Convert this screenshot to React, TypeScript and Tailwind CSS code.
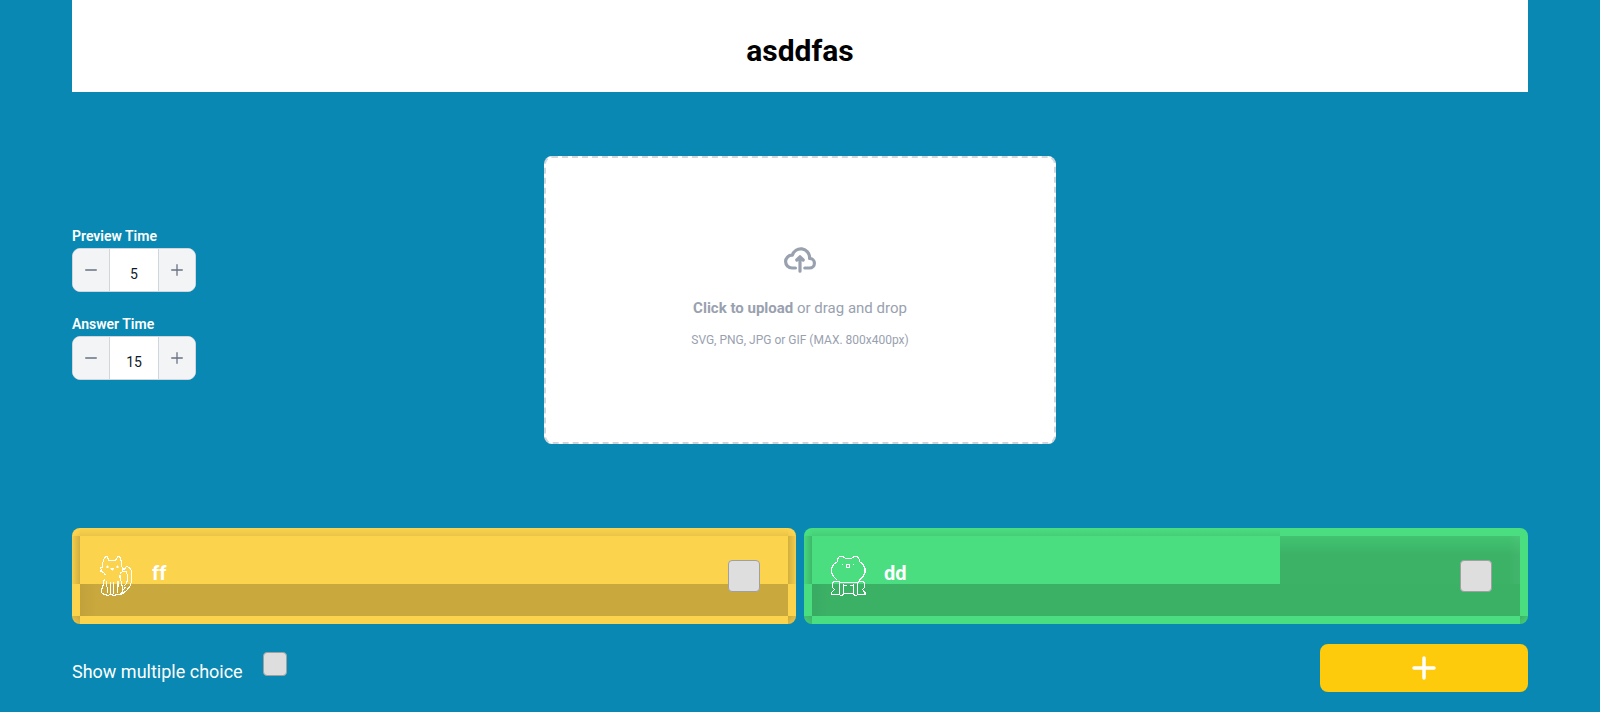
import { useState } from "react";
import type { ReactNode } from "react";

function CatIcon() {
  return (
    <svg viewBox="0 0 40 40" className="h-10 w-10 shrink-0" fill="none" stroke="white" strokeWidth="1.1" shapeRendering="crispEdges" aria-hidden="true">
      <path d="M8.5 17.5 6 15.5 4.5 15.5 5.5 13.5 4.5 12 6 11.5 6.5 7.5 8 3 9.5.5 11 .5 13 4.5H19.5L22 .5H23.5L25 4 25.5 10 27 12.5 28 13.5 26.5 14 27 15.5 25 16.5 23.5 18.5" />
      <path d="M8.5 17.5 9.5 19.5M9 23 7.5 25.5 7 30 5.5 34 6 37 8.5 38.5 12.5 39.5 14 38.5 19 39.5 21 38 24 38.5 26.5 36V32L25.5 27 24 21.5V18.5" />
      <path d="M10.500 25 11 31 12 37M14.500 26V38M17.500 26V38M22 25V31L21 37" />
      <path d="M28.500 14 29.500 11.500 31 10.500 33.500 11.500 35 14 35.500 18V25.500L34 30 31 34 27 37.500 24.500 38.500" />
      <path d="M28.500 15 30.500 15.500 31.500 20V24L30 28 27.500 30.500M29.500 31 27 34" />
      <path d="M10.500 9.500H12V11.500H10.500ZM20.500 9.500H22V11.500H20.500ZM14.500 12H18L17 14H15.500Z" fill="white" strokeWidth="0.5" />
    </svg>
  );
}

function BearIcon() {
  return (
    <svg viewBox="0 0 40 40" className="h-10 w-10 shrink-0" fill="none" stroke="white" strokeWidth="1.1" shapeRendering="crispEdges" aria-hidden="true">
      <path d="M9.500 24.500 5.500 20.500 3.500 16.500V12.500L5.500 8.500 9.500 5.500V3.500L11.500.5H14.500L17.500 2.500H23.500L26.500.5H29.500L31.500 3.500V5.500L35 8.500 37 12.500V16.500L35 20.500 31 24.500" />
      <path d="M11.500 25.500H5.500L4.500 27.500V31.500L6.500 33.500 3.500 36.500V38.500H11.500L12.500 39.500H14.500L15.500 37.500H25.500L26.500 39.500H28.500L29.500 38.500H37V36.500L34.500 33.500L36.500 31.500V27.500L35.500 25.500H29.500" />
      <path d="M10.500 26.500H30.500M11.500 26.500V38.500M15.500 27.500V38.500M25.500 27.500V38.500M29.500 26.500V38.500M16 29.500H18.500M22 29.500H24.500" />
      <path d="M18.500 8.500H21.500V11.500H18.500Z" />
      <path d="M14 8H15V9H14ZM25 8H26V9H25Z" fill="white" stroke="none" />
    </svg>
  );
}

function Stepper({ id, label, initial }: { id: string; label: string; initial: number }) {
  const [value, setValue] = useState(initial);
  const button = "flex w-9 shrink-0 cursor-pointer items-center justify-center bg-gray-100 text-gray-500";
  return (
    <div className="w-31">
      <label htmlFor={id} className="mb-1 block text-sm leading-4 font-semibold text-white">
        {label}
      </label>
      <div className="flex h-11 overflow-hidden rounded-lg border border-gray-300 bg-white">
        <button type="button" aria-label={`Decrease ${label}`} className={button} onClick={() => setValue(Math.max(0, value - 1))}>
          <svg viewBox="0 0 12 12" className="h-3 w-3" stroke="currentColor" strokeWidth="1.300" strokeLinecap="round" aria-hidden="true">
            <path d="M.7 6H11.300" />
          </svg>
        </button>
        <input
          id={id}
          type="text"
          inputMode="numeric"
          value={value}
          onChange={(e) => setValue(Number(e.target.value) || 0)}
          className="min-w-0 flex-1 border-x border-gray-300 bg-white pt-2 text-center text-sm text-gray-900 outline-none"
        />
        <button type="button" aria-label={`Increase ${label}`} className={button} onClick={() => setValue(value + 1)}>
          <svg viewBox="0 0 12 12" className="h-3 w-3" stroke="currentColor" strokeWidth="1.300" strokeLinecap="round" aria-hidden="true">
            <path d="M.7 6H11.300M6 .7V11.300" />
          </svg>
        </button>
      </div>
    </div>
  );
}

const checkbox =
  "shrink-0 cursor-pointer appearance-none rounded-sm border border-[#a0a0a0] bg-[#dedede] checked:bg-cyan-700";

function AnswerCard({ name, tone, icon, partial }: { name: string; tone: string; icon: ReactNode; partial?: boolean }) {
  const lit = partial ? "w-[66.1%]" : "w-full";
  return (
    <div className={`grid grid-cols-[8px_minmax(0,1fr)_8px] grid-rows-[8px_48px_32px_8px] overflow-hidden rounded-lg ${tone}`}>
      <div className="col-start-1 row-start-1 bg-linear-to-br from-transparent from-50% to-black/5" />
      <div className="col-start-2 row-start-1">
        <div className={`h-full bg-linear-to-b from-transparent to-black/7 ${lit}`} />
      </div>
      <div className={`col-start-3 row-start-1 ${partial ? "" : "bg-linear-to-bl from-transparent from-50% to-black/5"}`} />
      <div className="col-start-1 row-start-2 bg-linear-to-r from-black/3 to-black/17" />
      <div className="col-start-2 row-start-2 flex justify-end">
        {partial && (
          <div className="flex h-full w-[33.9%] bg-linear-to-b from-black/12 to-black/20 to-40%">
            <div className="ml-auto w-3 bg-linear-to-r from-transparent to-white/4" />
          </div>
        )}
      </div>
      <div className={`col-start-3 row-start-2 ${partial ? "" : "bg-linear-to-l from-black/3 to-black/17"}`} />
      <div className="col-start-2 row-start-3 flex bg-black/20">
        <div className="w-4 bg-linear-to-r from-black/4 to-transparent" />
      </div>
      <div className="col-start-1 row-start-4 bg-linear-to-tr from-black/5 to-black/20" />
      <div className="col-start-3 row-start-4 bg-linear-to-br from-black/20 to-black/5" />
      <div className="z-10 col-start-2 row-span-2 row-start-2 flex items-center gap-4 pr-7 pl-4">
        {icon}
        <input
          type="text"
          defaultValue={name}
          aria-label={`Answer ${name}`}
          className="mb-1.5 min-w-0 flex-1 bg-transparent text-xl font-bold text-white outline-none"
        />
        <input type="checkbox" aria-label={`Mark ${name} as correct`} className={`h-8 w-8 ${checkbox}`} />
      </div>
    </div>
  );
}

export default function App() {
  return (
    <div className="min-h-screen bg-[#0888b2] px-18 pb-5 font-[Roboto,sans-serif]">
      <header className="flex h-23 items-end bg-white pb-7">
        <input
          type="text"
          defaultValue="asddfas"
          aria-label="Question"
          className="h-7 w-full bg-transparent text-center text-3xl leading-7 font-bold text-black outline-none"
        />
      </header>

      <main>
        <section className="grid grid-cols-[1fr_minmax(0,512px)_1fr] items-center pt-16 pb-21">
          <div className="flex flex-col gap-6 pt-2">
            <Stepper id="preview-time" label="Preview Time" initial={5} />
            <Stepper id="answer-time" label="Answer Time" initial={15} />
          </div>
          <label
            htmlFor="media"
            className="flex h-72 cursor-pointer flex-col items-center justify-center rounded-lg border-2 border-dashed border-gray-300 bg-white pb-1.5 text-gray-400"
          >
            <svg viewBox="0 0 20 16" className="mb-5.5 h-8 w-8" fill="none" stroke="currentColor" strokeWidth="2" strokeLinecap="round" strokeLinejoin="round" aria-hidden="true">
              <path d="M13 13h3a3 3 0 0 0 0-6h-.025A5.560 5.560 0 0 0 16 6.500 5.500 5.500 0 0 0 5.207 5.021C5.137 5.017 5.071 5 5 5a4 4 0 0 0 0 8h2.167M10 15V6m0 0L8 8m2-2 2 2" />
            </svg>
            <span className="mb-3 text-[15px] leading-5">
              <span className="font-bold">Click to upload</span> or drag and drop
            </span>
            <span className="text-xs leading-5">SVG, PNG, JPG or GIF (MAX. 800x400px)</span>
            <input id="media" type="file" className="sr-only" />
          </label>
        </section>

        <section className="grid grid-cols-2 gap-2">
          <AnswerCard name="ff" tone="bg-[#fcd34d]" icon={<CatIcon />} />
          <AnswerCard name="dd" tone="bg-[#4ade80]" icon={<BearIcon />} partial />
        </section>

        <section className="flex items-start justify-between pt-5">
          <div className="flex items-start gap-5 pt-2">
            <label htmlFor="multiple" className="pt-2 text-lg leading-6 text-white">
              Show multiple choice
            </label>
            <input id="multiple" type="checkbox" className={`h-6 w-6 ${checkbox}`} />
          </div>
          <button type="button" aria-label="Add answer" className="flex h-12 w-52 cursor-pointer items-center justify-center rounded-lg bg-[#fdcb0b] text-white">
            <svg viewBox="0 0 24 24" className="h-6 w-6" stroke="currentColor" strokeWidth="3.500" strokeLinecap="round" aria-hidden="true">
              <path d="M12 2V22M2 12H22" />
            </svg>
          </button>
        </section>
      </main>
    </div>
  );
}
